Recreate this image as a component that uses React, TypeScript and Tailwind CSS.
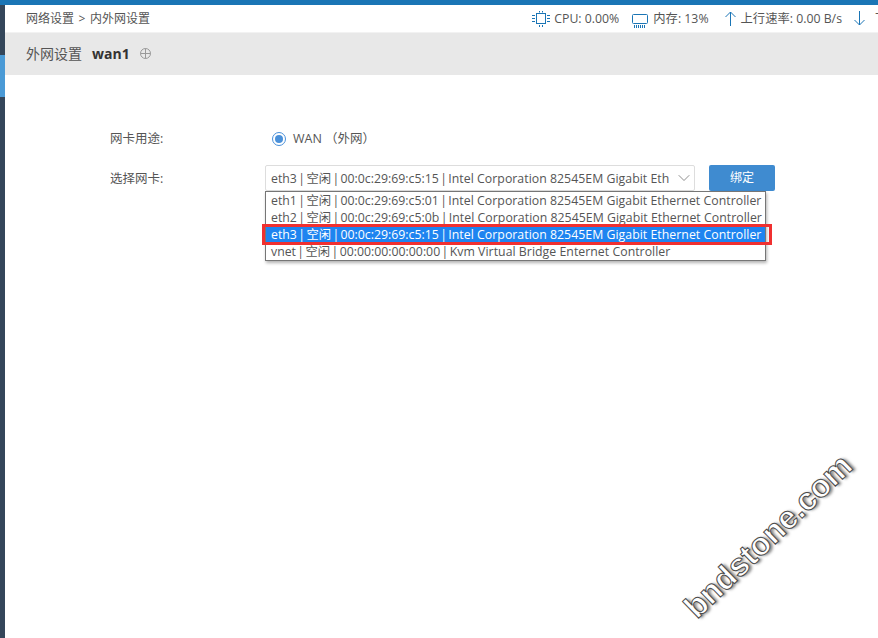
import { ChevronDown } from 'lucide-react';

const FONT = "font-['Open_Sans','Noto_Sans_CJK_SC',sans-serif]";

// [网卡信息, 型号]
const options = [
    ['eth1 | 空闲 | 00:0c:29:69:c5:01 | ', 'Intel Corporation 82545EM Gigabit Ethernet Controller'],
    ['eth2 | 空闲 | 00:0c:29:69:c5:0b | ', 'Intel Corporation 82545EM Gigabit Ethernet Controller'],
    ['eth3 | 空闲 | 00:0c:29:69:c5:15 | ', 'Intel Corporation 82545EM Gigabit Ethernet Controller'],
    ['vnet | 空闲 | 00:00:00:00:00:00 | ', 'Kvm Virtual Bridge Enternet Controller'],
];

function CpuIcon() {
    return (
        <svg width="18" height="16" viewBox="0 0 18 16" fill="none" stroke="#1a75b5" strokeWidth="1">
            <rect x="4.5" y="2.5" width="9" height="10" />
            <path d="M0 4.5h3M0 7.5h3M0 10.5h3M15 4.5h3M15 7.5h3M15 10.5h3M7.5 0v1.5M10.5 0v1.5M7.5 14v2M10.5 14v2" />
        </svg>
    );
}

function MemoryIcon() {
    return (
        <svg width="16" height="14" viewBox="0 0 16 14" fill="none" stroke="#1a75b5" strokeWidth="1">
            <rect x="0.5" y="0.5" width="15" height="9" rx="1" />
            <path d="M2.5 11v3M4.5 11v3M6.5 11v3M8.5 11v3M10.5 11v3M12.5 11v3" />
        </svg>
    );
}

function ArrowIcon({ down }: { down?: boolean }) {
    return (
        <svg width="11" height="15" viewBox="0 0 11 15" fill="none" stroke="#1a75b5" strokeWidth="1" className={down ? 'rotate-180' : ''}>
            <path d="M5.5 15V1M0.5 6l5-5 5 5" />
        </svg>
    );
}

export default function App() {
    return (
        <div className={`${FONT} relative flex h-[638px] w-[878px] flex-col overflow-hidden bg-white text-[13px] text-[#555]`}>
            <div className="h-[5px] shrink-0 bg-[#1a75b5]" />
            <div className="flex flex-1">
                {/* Sidebar */}
                <div className="flex w-[5px] shrink-0 flex-col bg-[#34465a]">
                    <div className="h-[50px]" />
                    <div className="h-[42px] bg-[#4a9ad6]" />
                </div>

                <div className="flex-1 min-w-0">
                    {/* Header */}
                    <div className="flex h-[28px] items-center justify-between overflow-hidden border-b border-[#f2f2f2] pl-[21px]">
                        <div className="whitespace-nowrap text-[12px] [word-spacing:1.5px]">网络设置 &gt; 内外网设置</div>
                        <div className="flex shrink-0 items-center whitespace-nowrap text-[12.3px]">
                            <CpuIcon />
                            <span className="ml-[4px] pt-px">CPU: 0.00%</span>
                            <span className="ml-[13px] mt-[4px]"><MemoryIcon /></span>
                            <span className="ml-[5px] pt-px">内存: 13%</span>
                            <span className="ml-[16px]"><ArrowIcon /></span>
                            <span className="ml-[5px] pt-px">上行速率: 0.00 B/s</span>
                            <span className="ml-[12px]"><ArrowIcon down /></span>
                            <span className="ml-[10px] w-[3px] overflow-hidden pt-px">下</span>
                        </div>
                    </div>

                    {/* Title bar */}
                    <div className="flex h-[42px] items-center bg-[#e8e8e8] pb-px pl-[21px] text-[14px]">
                        <span>外网设置</span>
                        <span className="ml-[10px] text-[14px] font-bold text-[#333]">wan1</span>
                        <svg className="ml-[10px]" width="11" height="11" viewBox="0 0 11 11" fill="none" stroke="#999" strokeWidth="1">
                            <circle cx="5.5" cy="5.5" r="5" />
                            <path d="M0.5 5.5h10M5.5 0.5v10" />
                        </svg>
                    </div>

                    {/* Form */}
                    <div className="pl-[105px] pt-[54px] text-[12.5px]">
                        <div className="flex h-[20px] items-center">
                            <div className="w-[162px]">网卡用途:</div>
                            <span className="flex h-[14px] w-[14px] items-center justify-center rounded-full border border-[#4a90d9]">
                                <span className="h-[8px] w-[8px] rounded-full bg-[#4a90d9]" />
                            </span>
                            <span className="ml-[7px] text-[12.5px]">WAN （外网）</span>
                        </div>

                        <div className="mt-[16px] flex items-center">
                            <div className="w-[155px] shrink-0 pt-[2px]">选择网卡:</div>
                            <div className="relative">
                                <div className="flex h-[26px] w-[430px] items-center justify-between rounded-[2px] border border-[#ddd] pl-[5px] text-[12.3px]">
                                    <span className="whitespace-nowrap pt-[2px]">
                                        <span className="[word-spacing:-1.8px]">{options[2][0]}</span>
                                        <span className="tracking-[0.03px]">Intel Corporation 82545EM Gigabit Eth</span>
                                    </span>
                                    <ChevronDown size={20} strokeWidth={1} color="#777" />
                                </div>

                                {/* Open dropdown */}
                                <div className="absolute left-0 top-[26px] z-10 w-[501px] border border-[#767676] bg-white text-[12.3px] shadow-[1px_2px_3px_rgba(0,0,0,0.3)]">
                                    {options.map((opt, idx) => (
                                        <div
                                            key={opt[0]}
                                            className={`h-[17px] whitespace-nowrap pl-[5px] leading-[17px] ${idx === 2 ? 'bg-[#1e84f0] text-white' : ''}`}
                                        >
                                            <span className="[word-spacing:-1.8px]">{opt[0]}</span>
                                            <span className="tracking-[0.03px]">{opt[1]}</span>
                                        </div>
                                    ))}
                                </div>
                                {/* Red highlight */}
                                <div className="pointer-events-none absolute left-[-3px] top-[59px] z-20 h-[21px] w-[510px] border-[3px] border-[#f03030]" />
                            </div>
                            <button className="ml-[14px] h-[26px] w-[66px] rounded-[2px] bg-[#3f8bd0] text-[12px] text-white">绑定</button>
                        </div>
                    </div>
                </div>
            </div>

            {/* Watermark */}
            <div className="pointer-events-none absolute left-[658px] top-[512px] z-30 w-[220px] -rotate-[44deg] whitespace-nowrap text-center font-['Liberation_Sans',sans-serif] text-[32px] font-bold text-white [-webkit-text-stroke:1px_#4a4a4a] [text-shadow:2px_2px_3px_rgba(0,0,0,0.5)]">
                bndstone.com
            </div>
        </div>
    );
}
